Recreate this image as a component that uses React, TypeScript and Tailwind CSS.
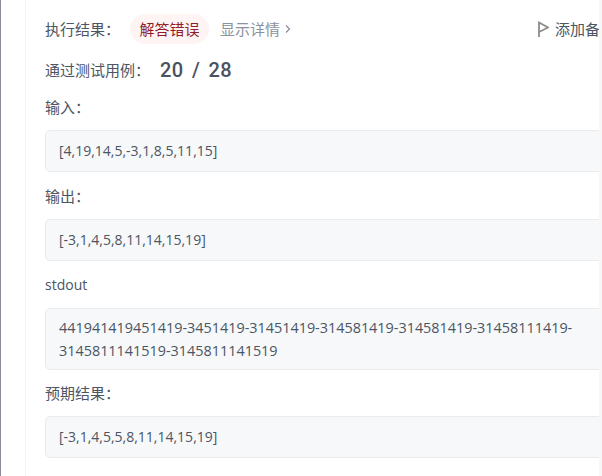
import type { ReactNode } from 'react';

function OutputBox({ children }: { children: ReactNode }) {
  return (
    <div className="mt-[12px] w-[600px] rounded-[5px] border border-[#e9ebee] bg-[#f7f8fa] py-[9px] pl-[13px] pr-[28px] text-[14px] leading-[22px] text-[#4b5563]">
      {children}
    </div>
  );
}

function Label({ children }: { children: ReactNode }) {
  return <div className="mt-[13px] h-[22px] text-[15px] leading-[22px] text-[#4b5563]">{children}</div>;
}

export default function App() {
  return (
    <div className="h-[476px] w-[602px] overflow-hidden bg-white" style={{ fontFamily: '"Open Sans", "Noto Sans CJK SC", sans-serif' }}>
      <div className="flex h-full">
        <div className="w-[1px] bg-[#8b8d98]" />
        <div className="ml-[24px] w-[1px] bg-[#f3f4f6]" />
        {/* Result panel, cut off by the scrollbar track on the right */}
        <div className="relative flex-1 overflow-hidden pl-[19px]">
          <div className="mt-[14px] flex h-[30px] items-center text-[15px] text-[#4b5563]">
            <span className="w-[85px]">执行结果：</span>
            <span className="flex h-[30px] w-[79px] items-center justify-center rounded-full bg-[#fef4f4] text-[#8f1d2c]">解答错误</span>
            <span className="ml-[11px] text-[#8a929e]">显示详情</span>
            <svg className="ml-[5px] h-[10px] w-[6px]" viewBox="0 0 6 10" fill="none" stroke="#8a929e" strokeWidth="1.3">
              <path d="M1 1.5l3.5 3.5-3.5 3.5" />
            </svg>
            <div className="absolute left-[512px] top-[21px] flex items-start gap-[6px]">
              <svg className="h-[16px] w-[11px]" viewBox="0 0 11 16" fill="none" stroke="#8c8c8c" strokeWidth="1.8">
                <path d="M1 16V1.5L10 6.5 1 11" />
              </svg>
              <span className="-mt-[3px] whitespace-nowrap">添加备注</span>
            </div>
          </div>
          <div className="mt-[10px] flex h-[32px] items-center text-[15px] text-[#4b5563]">
            <span className="w-[115px]">通过测试用例：</span>
            <span className="text-[20px] font-medium tracking-[0.4px] text-[#4a5160] [word-spacing:3px]" style={{ fontFamily: 'Roboto, sans-serif' }}>20 / 28</span>
          </div>
          <div className="mt-[10px] h-[22px] text-[15px] leading-[22px] text-[#4b5563]">输入：</div>
          <OutputBox>[4,19,14,5,-3,1,8,5,11,15]</OutputBox>
          <Label>输出：</Label>
          <OutputBox>[-3,1,4,5,8,11,14,15,19]</OutputBox>
          <div className="mt-[13px] h-[22px] text-[14px] leading-[22px] text-[#4b5563]">stdout</div>
          <div className="mt-[12px] w-[600px] rounded-[5px] border border-[#e9ebee] bg-[#f7f8fa] py-[7px] pl-[13px] pr-[28px] text-[14.4px] leading-[23px] text-[#4b5563]">
            441941419451419-3451419-31451419-314581419-314581419-31458111419-3145811141519-3145811141519
          </div>
          <div className="mt-[12px] h-[22px] text-[15px] leading-[22px] text-[#4b5563]">预期结果：</div>
          <OutputBox>[-3,1,4,5,5,8,11,14,15,19]</OutputBox>
        </div>
        <div className="w-[3px] bg-[#f7f7f8]" />
      </div>
    </div>
  );
}
